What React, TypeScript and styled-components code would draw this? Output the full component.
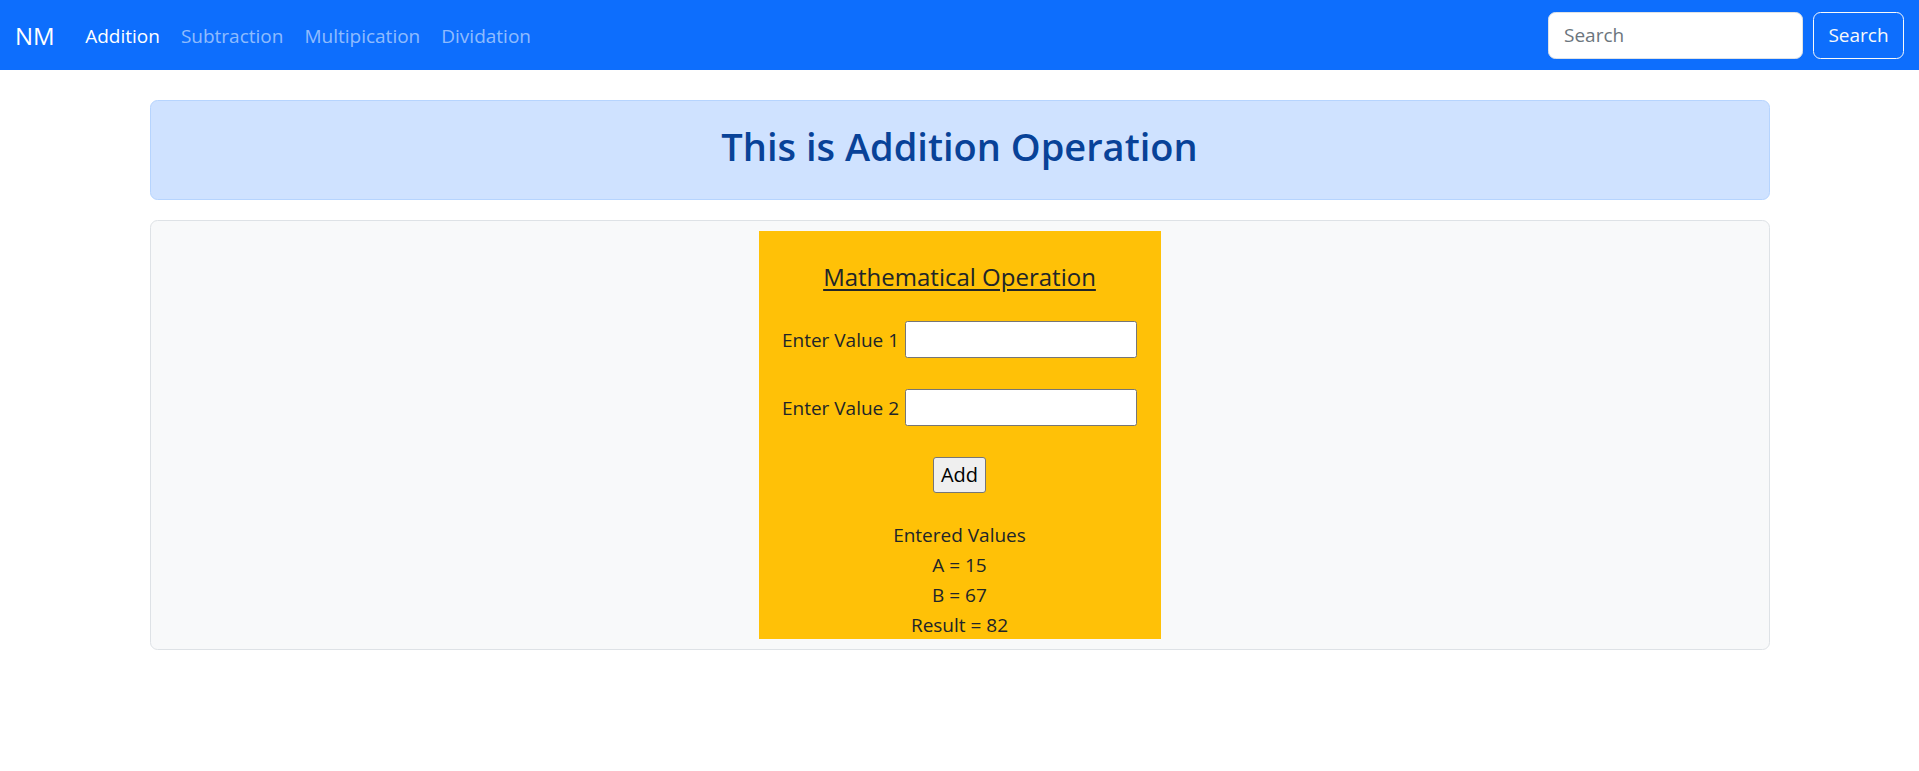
import { useState } from "react";
import styled, { createGlobalStyle } from "styled-components";

const GlobalStyle = createGlobalStyle`
  * {
    box-sizing: border-box;
  }

  body {
    margin: 0;
    font-family: "Open Sans", "Noto Sans", sans-serif;
    font-size: 19px;
    line-height: 1.5;
    color: #212529;
    background: #fff;
  }
`;

const links = ["Addition", "Subtraction", "Multipication", "Dividation"];

const App = () => {
  const [a, setA] = useState("");
  const [b, setB] = useState("");

  return (
    <>
      <GlobalStyle />
      <Navbar>
        <NavLeft>
          <Brand href="#">NM</Brand>
          <NavList>
            {links.map((l, i) => (
              <NavLink key={l} href="#" $active={i === 0}>
                {l}
              </NavLink>
            ))}
          </NavList>
        </NavLeft>
        <SearchForm onSubmit={(e) => e.preventDefault()}>
          <SearchInput type="search" placeholder="Search" />
          <SearchButton type="submit">Search</SearchButton>
        </SearchForm>
      </Navbar>

      <Container>
        <Alert>
          <Heading>This is Addition Operation</Heading>
        </Alert>

        <Panel>
          <Card>
            <Title>Mathematical Operation</Title>
            <Row>
              <label htmlFor="v1">Enter Value 1</label>
              <ValueInput id="v1" value={a} onChange={(e) => setA(e.target.value)} />
            </Row>
            <Row>
              <label htmlFor="v2">Enter Value 2</label>
              <ValueInput id="v2" value={b} onChange={(e) => setB(e.target.value)} />
            </Row>
            <AddButton type="button">Add</AddButton>
            <Results>
              <div>Entered Values</div>
              <div>A = 15</div>
              <div>B = 67</div>
              <div>Result = 82</div>
            </Results>
          </Card>
        </Panel>
      </Container>
    </>
  );
};

const Navbar = styled.nav`
  height: 70px;
  background-color: #0d6efd;
  padding: 0 15px;
  display: flex;
  align-items: center;
  justify-content: space-between;
`;

const NavLeft = styled.div`
  display: flex;
  align-items: center;
  padding-top: 2px;
`;

const Brand = styled.a`
  font-size: 24px;
  color: #fff;
  text-decoration: none;
  margin-right: 20px;
`;

const NavList = styled.div`
  display: flex;
`;

const NavLink = styled.a<{ $active?: boolean }>`
  padding: 0 10.5px;
  font-size: 19px;
  text-decoration: none;
  color: ${({ $active }) => ($active ? "#fff" : "rgba(255, 255, 255, 0.55)")};
`;

const SearchForm = styled.form`
  display: flex;
  gap: 10px;
`;

const SearchInput = styled.input`
  width: 255px;
  height: 47px;
  padding: 0 15px;
  font: inherit;
  font-size: 19px;
  color: #212529;
  border: 1px solid #dee2e6;
  border-radius: 7.5px;
  outline: none;

  &::placeholder {
    color: #6c757d;
  }
`;

const SearchButton = styled.button`
  width: 91px;
  height: 47px;
  font: inherit;
  font-size: 19px;
  color: #f8f9fa;
  background: transparent;
  border: 1px solid #f8f9fa;
  border-radius: 7.5px;
  cursor: pointer;
`;

const Container = styled.main`
  max-width: 1650px;
  margin: 0 auto;
  padding: 0 15px;
`;

const Alert = styled.div`
  margin-top: 30px;
  margin-bottom: 20px;
  padding: 20px;
  background-color: #cfe2ff;
  border: 1px solid #b6d4fe;
  border-radius: 7.5px;
  color: #084298;
  text-align: center;
`;

const Heading = styled.h2`
  margin: 0 0 10px;
  padding-top: 2px;
  height: 48px;
  font-size: 38px;
  font-weight: 600;
  line-height: 46px;
`;

const Panel = styled.section`
  padding: 10px;
  background-color: #f8f9fa;
  border: 1px solid #dee2e6;
  border-radius: 7.5px;
`;

const Card = styled.div`
  width: 402px;
  margin: 0 auto;
  padding-top: 31px;
  background-color: #ffc107;
  display: flex;
  flex-direction: column;
  align-items: center;
`;

const Title = styled.h5`
  margin: 0 0 29px;
  font-size: 24px;
  font-weight: 500;
  line-height: 30px;
  text-decoration: underline;
  text-underline-offset: 3px;
`;

const Row = styled.div`
  display: flex;
  align-items: baseline;
  gap: 6px;
  margin-bottom: 31px;
`;

const ValueInput = styled.input`
  width: 232px;
  height: 37px;
  padding: 1px 2px;
  font: inherit;
  border: 1px solid #767676;
  border-radius: 2.5px;
  background: #fff;
`;

const AddButton = styled.button`
  height: 36px;
  padding: 0 7px;
  font: inherit;
  font-size: 20px;
  line-height: 1;
  color: #000;
  background-color: #efefef;
  border: 1px solid #767676;
  border-radius: 3px;
`;

const Results = styled.div`
  margin-top: 27px;
  text-align: center;
  line-height: 30px;
  margin-bottom: -1px;
`;

export default App;
